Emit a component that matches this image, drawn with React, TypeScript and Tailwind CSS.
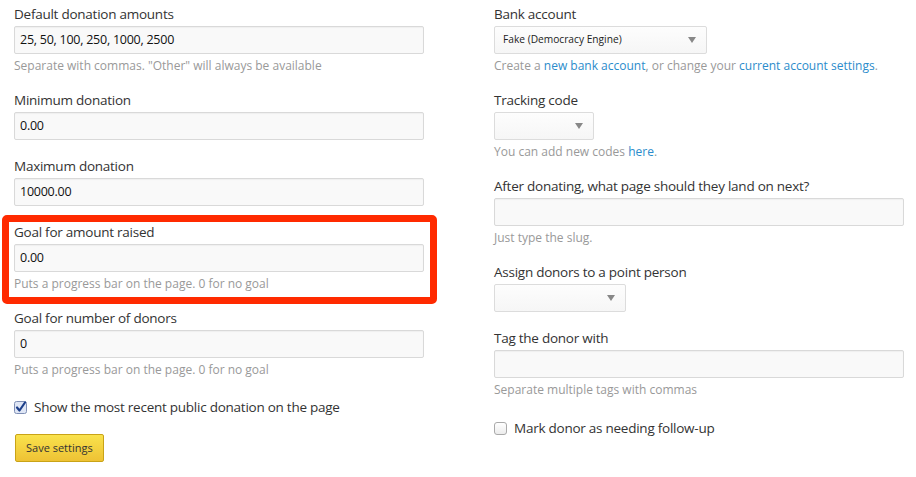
import type { ReactNode } from "react"

const font = { fontFamily: '"Open Sans", "Liberation Sans", sans-serif' }

function Label({ children }: { children: ReactNode }) {
  return <div className="h-[20px] whitespace-nowrap text-[13.5px] leading-[20px] tracking-[-0.25px] text-[#333]">{children}</div>
}

function Help({ children }: { children: ReactNode }) {
  return <div className="mt-[3px] h-[18px] whitespace-nowrap text-[12px] leading-[18px] text-[#999]">{children}</div>
}

function TextInput({ value = "" }: { value?: string }) {
  return (
    <div className="mt-[2px] flex h-[28px] w-[410px] items-center rounded-[2px] border border-[#d9d9d9] bg-[#f9f9f9] pl-[5px] text-[12.5px] tracking-[-0.25px] text-[#111] shadow-[inset_0_1px_1px_rgba(0,0,0,0.04)]">
      {value}
    </div>
  )
}

function Select({ width, value = "" }: { width: string; value?: string }) {
  return (
    <div
      className={`mt-[2px] flex h-[28px] items-center justify-between rounded-[2px] border border-[#dcdcdc] bg-gradient-to-b from-[#fdfdfd] to-[#f6f6f6] pl-[8px] pr-[10px] text-[10.2px] text-[#222] ${width}`}
    >
      <span>{value}</span>
      <svg width="8" height="6" viewBox="0 0 8 6">
        <path d="M0 0h8L4 6z" fill="#888" />
      </svg>
    </div>
  )
}

function Field({ label, help, children, last }: { label: string; help?: ReactNode; children: ReactNode; last?: boolean }) {
  return (
    <div className={last ? "" : help ? "mb-[15px]" : "mb-[16px]"}>
      <Label>{label}</Label>
      {children}
      {help && <Help>{help}</Help>}
    </div>
  )
}

function Check({ checked, label }: { checked?: boolean; label: string }) {
  return (
    <div className="flex h-[20px] items-center gap-[7px] text-[13.5px] tracking-[-0.25px] text-[#333]">
      {checked ? (
        <svg width="13" height="13" viewBox="0 0 13 13">
          <rect x="0.5" y="0.5" width="12" height="12" rx="2" fill="#dfe6f5" stroke="#7f8fb5" />
          <path d="M3 6.5l2.5 3L11 1.5" fill="none" stroke="#1d3f8a" strokeWidth="2.2" strokeLinecap="round" strokeLinejoin="round" />
        </svg>
      ) : (
        <span className="h-[13px] w-[13px] rounded-[3px] border border-[#aaa] bg-gradient-to-b from-white to-[#ececec]" />
      )}
      <span>{label}</span>
    </div>
  )
}

function A({ children }: { children: ReactNode }) {
  return <a className="text-[#2b8ccb]">{children}</a>
}

export default function App() {
  return (
    <div style={font} className="h-[477px] w-[916px] bg-white">
      <div className="flex gap-[70px] pl-[14px] pt-[4px]">
        <div className="w-[410px]">
          <Field label="Default donation amounts" help={'Separate with commas. "Other" will always be available'}>
            <TextInput value="25, 50, 100, 250, 1000, 2500" />
          </Field>
          <Field label="Minimum donation">
            <TextInput value="0.00" />
          </Field>
          <Field label="Maximum donation">
            <TextInput value="10000.00" />
          </Field>
          <div className="relative">
            <div className="pointer-events-none absolute -bottom-[11px] -left-[12px] -right-[13px] -top-[7px] rounded-[5px] border-[7px] border-[#ff2a00]" />
            <Field label="Goal for amount raised" help="Puts a progress bar on the page. 0 for no goal">
              <TextInput value="0.00" />
            </Field>
          </div>
          <Field label="Goal for number of donors" help="Puts a progress bar on the page. 0 for no goal" last>
            <TextInput value="0" />
          </Field>
          <div className="mt-[18px]">
            <Check checked label="Show the most recent public donation on the page" />
          </div>
          <button className="ml-[1px] mt-[17px] h-[28px] rounded-[2px] border border-[#c9a317] bg-gradient-to-b from-[#f9e24c] to-[#eec234] px-[10px] text-[11px] text-[#333]">
            Save settings
          </button>
        </div>
        <div className="w-[410px]">
          <Field
            label="Bank account"
            help={
              <>
                Create a <A>new bank account</A>, or change your <A>current account settings</A>.
              </>
            }
          >
            <Select width="w-[213px]" value="Fake (Democracy Engine)" />
          </Field>
          <Field
            label="Tracking code"
            help={
              <>
                You can add new codes <A>here</A>.
              </>
            }
          >
            <Select width="w-[100px]" />
          </Field>
          <Field label="After donating, what page should they land on next?" help="Just type the slug.">
            <TextInput />
          </Field>
          <Field label="Assign donors to a point person">
            <Select width="w-[132px]" />
          </Field>
          <Field label="Tag the donor with" help="Separate multiple tags with commas" last>
            <TextInput />
          </Field>
          <div className="mt-[19px]">
            <Check label="Mark donor as needing follow-up" />
          </div>
        </div>
      </div>
    </div>
  )
}
